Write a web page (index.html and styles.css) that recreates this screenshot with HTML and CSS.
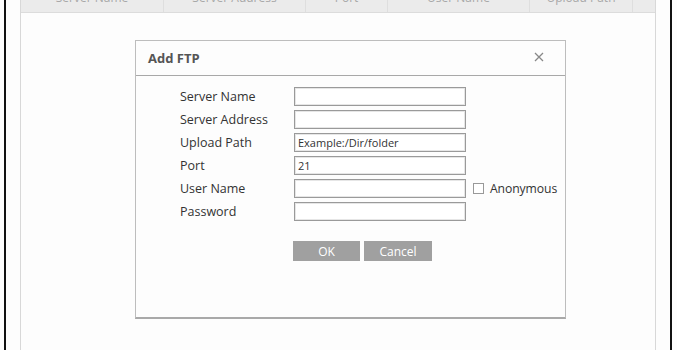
FILE: index.html
```html
<!DOCTYPE html>
<html>
<head>
<meta charset="utf-8">
<link rel="stylesheet" href="styles.css">
</head>
<body>
<div class="frame">
  <div class="panel">
    <div class="thead">
      <div class="th c1"><span>Server Name</span></div>
      <div class="th c2"><span>Server Address</span></div>
      <div class="th c3"><span>Port</span></div>
      <div class="th c4"><span>User Name</span></div>
      <div class="th c5"><span>Upload Path</span></div>
      <div class="th c6"></div>
    </div>
    <div class="dialog">
      <div class="dlg-head">
        <span class="dlg-title">Add FTP</span>
        <span class="dlg-close">
          <svg width="10" height="10" viewBox="0 0 10 10"><path d="M1 1L9 9M9 1L1 9" stroke="#888" stroke-width="1.3" fill="none"/></svg>
        </span>
      </div>
      <div class="form">
        <div class="row"><label class="lbl">Server Name</label><input class="field" type="text" value=""></div>
        <div class="row"><label class="lbl">Server Address</label><input class="field" type="text" value=""></div>
        <div class="row"><label class="lbl">Upload Path</label><input class="field" type="text" value="Example:/Dir/folder"></div>
        <div class="row"><label class="lbl">Port</label><input class="field" type="text" value="21"></div>
        <div class="row"><label class="lbl">User Name</label><input class="field" type="text" value=""><span class="anon"><span class="chk"></span>Anonymous</span></div>
        <div class="row"><label class="lbl">Password</label><input class="field" type="password" value=""></div>
      </div>
      <div class="buttons">
        <button class="btn btn-ok">OK</button>
        <button class="btn btn-cancel">Cancel</button>
      </div>
    </div>
  </div>
</div>
</body>
</html>
```

FILE: styles.css
```css
html, body {
  margin: 0;
  padding: 0;
  background: #fdfdfd;
  font-family: "Open Sans", "Noto Sans", sans-serif;
  color: #333;
}
.frame {
  margin-left: 4px;
  width: 664px;
  height: 350px;
  border-left: 2px solid #111;
  border-right: 2px solid #111;
  overflow: hidden;
}
.panel {
  margin: 0 14px;
  height: 350px;
  border-left: 1px solid #d8d8d8;
  border-right: 1px solid #d8d8d8;
  background: #fdfdfd;
}
.thead {
  display: flex;
  height: 12px;
  background: #ebebeb;
  border-bottom: 1px solid #dcdcdc;
  overflow: hidden;
}
.th {
  height: 12px;
  overflow: hidden;
  border-right: 1px solid #dedede;
  text-align: center;
  font-size: 12px;
  color: #a8a8a8;
  line-height: 12px;
}
.th span {
  display: block;
  margin-top: -8px;
}
.c1 { width: 142px; }
.c2 { width: 141px; }
.c3 { width: 81px; }
.c4 { width: 141px; }
.c5 { width: 102px; }
.c6 { flex: 1; border-right: none; }

.dialog {
  margin: 27px 0 0 114px;
  width: 429px;
  height: 276px;
  border: 1px solid #bdbdbd;
  border-bottom: 2px solid #a9a9a9;
  background: #fdfdfd;
}
.dlg-head {
  display: flex;
  align-items: center;
  justify-content: space-between;
  height: 34px;
  border-bottom: 1px solid #a8a8a8;
  padding: 0 21px 0 12px;
}
.dlg-title {
  font-weight: bold;
  font-size: 13px;
  color: #555;
}
.dlg-close {
  display: flex;
  margin-top: -2px;
}
.form {
  padding: 11px 0 0 44px;
  display: flex;
  flex-direction: column;
  gap: 4px;
}
.row {
  display: flex;
  align-items: center;
  height: 19px;
}
.lbl {
  width: 114px;
  font-size: 12.5px;
  color: #333;
}
.field {
  box-sizing: border-box;
  width: 172px;
  height: 19px;
  margin: 0;
  padding: 0 3px;
  border: 1px solid #9a9a9a;
  box-shadow: inset 0 0 0 1px #e6e6e6;
  background: #fff;
  font-family: inherit;
  font-size: 11px;
  color: #333;
  outline: none;
}
.anon {
  display: flex;
  align-items: center;
  margin-left: 7px;
  font-size: 12.2px;
  letter-spacing: -0.1px;
  color: #333;
}
.chk {
  width: 9px;
  height: 9px;
  border: 1px solid #999;
  background: #fff;
  margin-right: 6px;
}
.buttons {
  display: flex;
  gap: 4px;
  padding: 20px 0 0 157px;
}
.btn {
  height: 20px;
  border: none;
  background: #a0a0a0;
  color: #fff;
  font-family: inherit;
  font-size: 12px;
  padding: 0;
}
.btn-ok { width: 67px; }
.btn-cancel { width: 68px; }
```
